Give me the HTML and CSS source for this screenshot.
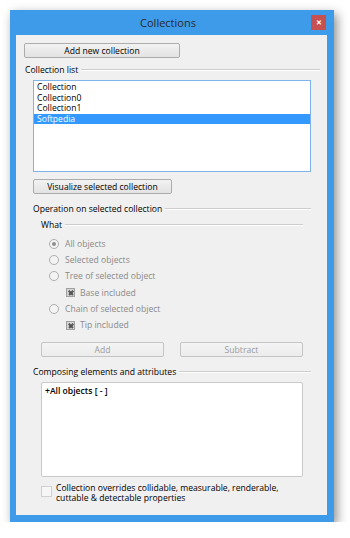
FILE: index.html
```html
<!DOCTYPE html>
<html lang="en">
<head>
    <meta charset="UTF-8">
    <meta name="viewport" content="width=device-width, initial-scale=1.0">
    <title>Collections</title>
    <link rel="stylesheet" href="styles.css">
</head>
<body>
    <div class="window">
        <div class="titlebar">
            <div class="title">Collections</div>
            <div class="close">&#x2715;</div>
        </div>
        <div class="content">
            <button class="btn btn-add-collection">Add new collection</button>

            <div class="group-label lbl-list"><span>Collection list</span></div>
            <div class="listbox">
                <div class="item">Collection</div>
                <div class="item">Collection0</div>
                <div class="item">Collection1</div>
                <div class="item selected">Softpedia</div>
            </div>
            <button class="btn btn-visualize">Visualize selected collection</button>

            <div class="group-label lbl-operation"><span>Operation on selected collection</span></div>
            <div class="group-label lbl-what"><span>What</span></div>

            <div class="options">
                <div class="opt"><span class="radio checked"></span>All objects</div>
                <div class="opt"><span class="radio"></span>Selected objects</div>
                <div class="opt"><span class="radio"></span>Tree of selected object</div>
                <div class="opt sub"><span class="check"></span>Base included</div>
                <div class="opt"><span class="radio"></span>Chain of selected object</div>
                <div class="opt sub"><span class="check"></span>Tip included</div>
            </div>

            <div class="op-buttons">
                <button class="btn disabled">Add</button>
                <button class="btn disabled">Subtract</button>
            </div>

            <div class="group-label lbl-composing"><span>Composing elements and attributes</span></div>
            <div class="textbox">+All objects [ - ]</div>

            <div class="override">
                <span class="box"></span>
                <div class="override-text">Collection overrides collidable, measurable, renderable,<br>cuttable &amp; detectable properties</div>
            </div>
        </div>
    </div>
</body>
</html>
```

FILE: styles.css
```css
body {
    margin: 0;
    background-color: #ffffff;
    font-family: "Open Sans", "Noto Sans", sans-serif;
    font-size: 8.6px;
    color: #000;
}
.window {
    margin: 10px 0 0 10px;
    width: 324px;
    height: 512px;
    background-color: #3d9be9;
    box-shadow: 3px 4px 10px rgba(0, 0, 0, 0.45);
    display: flex;
    flex-direction: column;
}
.titlebar {
    height: 25px;
    display: flex;
    align-items: center;
}
.title {
    flex: 1;
    text-align: center;
    padding-left: 18px;
    font-size: 11px;
    color: #2b2b2b;
}
.close {
    width: 15px;
    height: 15px;
    margin: 0 8px 0 3px;
    background-color: #c75050;
    color: #fff;
    font-size: 7px;
    font-weight: bold;
    display: flex;
    justify-content: center;
    align-items: center;
}
.content {
    flex: 1;
    margin: 0 7px 7px 6px;
    background-color: #f0f0f0;
    padding: 8px 0 0 0;
    display: flex;
    flex-direction: column;
}
.btn {
    font-family: inherit;
    font-size: 8.6px;
    height: 15px;
    padding: 0;
    line-height: 12px;
    color: #000;
    background: linear-gradient(#f2f2f2, #e3e3e3);
    border: 1px solid #acacac;
    border-radius: 2px;
}
.btn.disabled {
    color: #9c9c9c;
    border-color: #c4c4c4;
    background: linear-gradient(#f4f4f4, #ececec);
}
.btn-add-collection {
    width: 156px;
    margin-left: 8px;
}
.group-label {
    display: flex;
    align-items: center;
    height: 12px;
}
.group-label span {
    padding-right: 3px;
}
.group-label::after {
    content: "";
    flex: 1;
    border-top: 1px solid #cdcdcd;
    border-bottom: 1px solid #ffffff;
}
.lbl-list {
    margin: 6px 7px 0 9px;
}
.listbox {
    margin: 4px 16px 0 17px;
    height: 89px;
    background: #fff;
    border: 1px solid #7eb4ea;
    padding-top: 1px;
}
.item {
    height: 10.5px;
    line-height: 10.5px;
    padding-left: 3px;
}
.item.selected {
    background-color: #3399ff;
    color: #fff;
}
.btn-visualize {
    width: 139px;
    margin: 7px 0 0 17px;
}
.lbl-operation {
    margin: 9px 16px 0 17px;
}
.lbl-what {
    margin: 4px 24px 0 25px;
}
.options {
    margin: 5px 0 0 33px;
    color: #8a8a8a;
}
.opt {
    height: 16.2px;
    display: flex;
    align-items: center;
}
.opt.sub {
    padding-left: 17px;
}
.radio {
    width: 8px;
    height: 8px;
    border: 1px solid #adadad;
    border-radius: 50%;
    background: #f4f4f4;
    margin-right: 6px;
    display: flex;
    justify-content: center;
    align-items: center;
}
.radio.checked::after {
    content: "";
    width: 4px;
    height: 4px;
    border-radius: 50%;
    background: #8e8e8e;
}
.check {
    width: 7px;
    height: 7px;
    border: 1px solid #a0a0a0;
    background: #d6d6d6;
    margin-right: 5px;
    position: relative;
}
.check::before,
.check::after {
    content: "";
    position: absolute;
    left: 0.5px;
    top: 3px;
    width: 6px;
    height: 1.5px;
    background: #555;
    transform: rotate(45deg);
}
.check::after {
    transform: rotate(-45deg);
}
.op-buttons {
    margin: 9px 24px 0 25px;
    display: flex;
    justify-content: space-between;
}
.op-buttons .btn {
    width: 123px;
}
.lbl-composing {
    margin: 9px 16px 0 17px;
}
.textbox {
    margin: 4px 24px 0 25px;
    height: 90px;
    background: #fff;
    border: 1px solid #c9c9c9;
    border-radius: 2px;
    padding: 3px 0 0 3px;
    line-height: 11px;
    font-weight: 600;
}
.override {
    margin: 6px 0 0 25px;
    display: flex;
    align-items: flex-start;
}
.box {
    width: 9px;
    height: 9px;
    margin-top: 3px;
    margin-right: 4px;
    border: 1px solid #d0d0d0;
    background: #f6f6f6;
}
.override-text {
    line-height: 10px;
}
```
